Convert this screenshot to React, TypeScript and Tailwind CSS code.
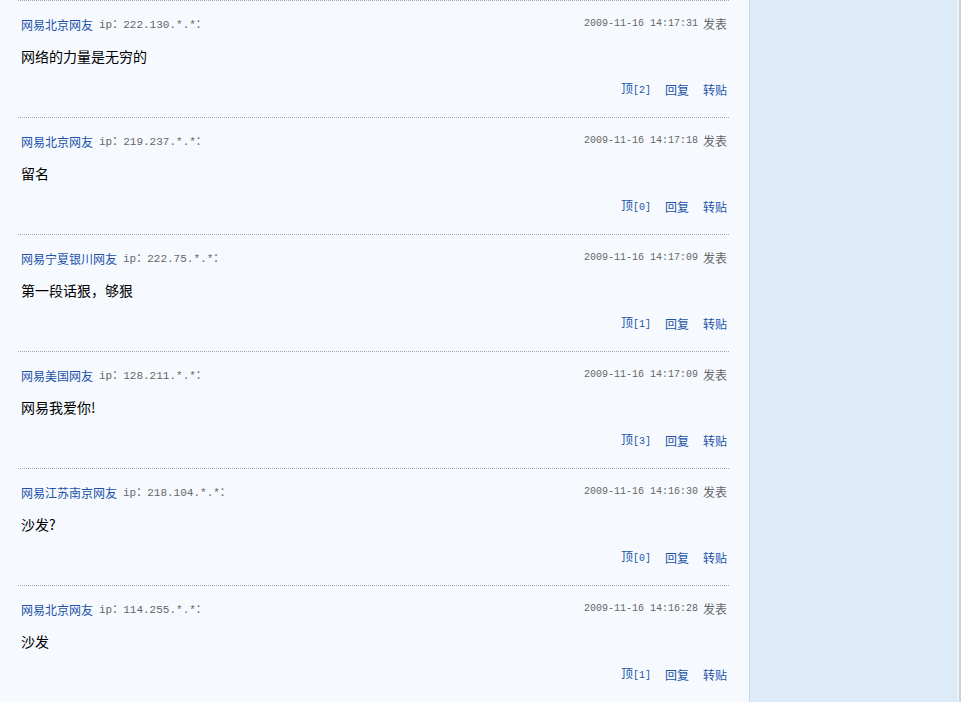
import React from 'react';

// comment list, 163-style
const comments = [
  { name: '网易北京网友', ip: '222.130.*.*', time: '2009-11-16 14:17:31', body: '网络的力量是无穷的', up: 2 },
  { name: '网易北京网友', ip: '219.237.*.*', time: '2009-11-16 14:17:18', body: '留名', up: 0 },
  { name: '网易宁夏银川网友', ip: '222.75.*.*', time: '2009-11-16 14:17:09', body: '第一段话狠，够狠', up: 1 },
  { name: '网易美国网友', ip: '128.211.*.*', time: '2009-11-16 14:17:09', body: '网易我爱你!', up: 3 },
  { name: '网易江苏南京网友', ip: '218.104.*.*', time: '2009-11-16 14:16:30', body: '沙发?', up: 0 },
  { name: '网易北京网友', ip: '114.255.*.*', time: '2009-11-16 14:16:28', body: '沙发', up: 1 },
];

const cjk = "font-['Noto_Sans_CJK_SC','Noto_Sans',sans-serif]";
const mono = "font-['Liberation_Mono','Noto_Sans_CJK_SC',monospace]";

function Comment({ c }: { c: (typeof comments)[number] }) {
  return (
    <div className="h-[117px] border-t border-dotted border-[#a8a8a8] flex flex-col px-[3px] pr-[2px]">
      <div className="flex items-center justify-between pt-[16px] leading-4">
        <div className="flex items-center">
          <a className={`${cjk} text-[12px] text-[#1c53a8]`}>{c.name}</a>
          <span className={`${mono} text-[11px] text-[#666] ml-[6px]`}>ip：{c.ip}：</span>
        </div>
        <div className="flex items-center -mt-[3px]">
          <span className={`${mono} text-[10px] text-[#666]`}>{c.time}</span>
          <span className={`${cjk} text-[12px] text-[#666] ml-[5px]`}>发表</span>
        </div>
      </div>
      <p className={`${cjk} text-[14px] leading-5 text-black mt-[13px]`}>{c.body}</p>
      <div className="flex justify-end items-center mt-[14px] leading-4 text-[12px] text-[#1c53a8] gap-[14px]">
        <a className={cjk}>
          顶<span className={`${mono} text-[10px]`}>[{c.up}]</span>
        </a>
        <a className={cjk}>回复</a>
        <a className={cjk}>转贴</a>
      </div>
    </div>
  );
}

export default function App() {
  return (
    <div className="flex w-[961px] h-[702px] overflow-hidden bg-[#f6faff]">
      <div className="w-[749px] h-full bg-[#f6faff] pl-[18px] pr-[20px]">
        {comments.map((c, i) => (
          <Comment key={i} c={c} />
        ))}
      </div>
      <div className="w-[1px] h-full bg-[#c8d8ea]" />
      <div className="flex-1 h-full bg-[#ddebf8]" />
      <div className="w-[2px] h-full bg-[#e9f2fb]" />
      <div className="w-[2px] h-full bg-[#cfd3d8]" />
    </div>
  );
}
